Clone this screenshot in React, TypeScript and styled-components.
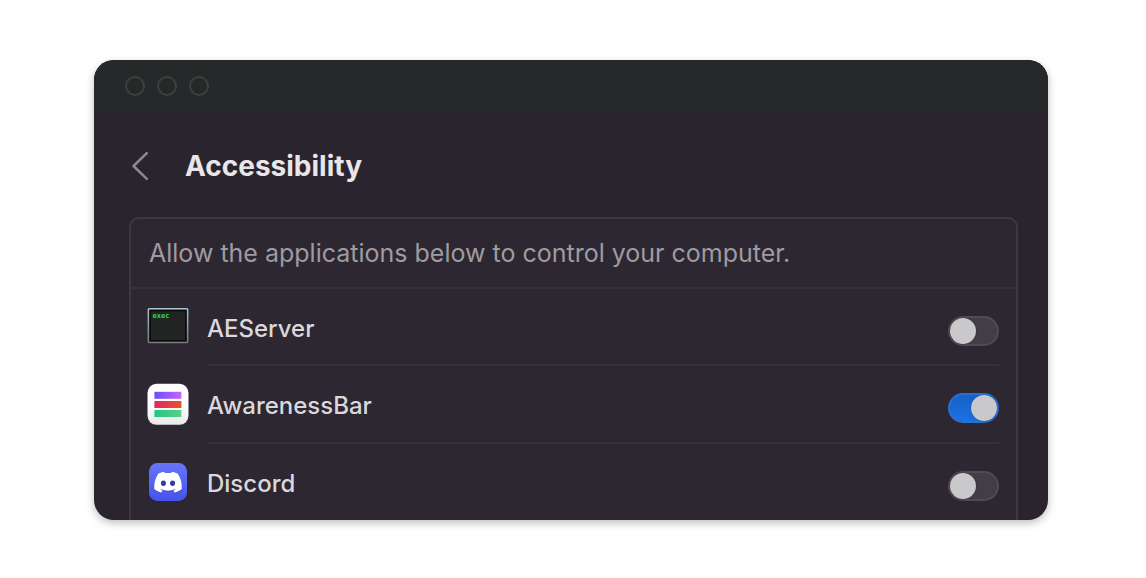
import React, { useState } from "react";
import styled, { createGlobalStyle } from "styled-components";

const GlobalStyle = createGlobalStyle`
  * { box-sizing: border-box; }
  body {
    margin: 0;
    background: #ffffff;
    font-family: Inter, "Liberation Sans", sans-serif;
  }
`;

const Page = styled.main`
  display: flex;
  height: 100vh;
  padding: 60px 98px 58px 94px;
`;

const Window = styled.section`
  display: flex;
  flex: 1;
  flex-direction: column;
  min-width: 0;
  overflow: hidden;
  border-radius: 20px;
  background: #2a242e;
  box-shadow: 0 3px 8px rgba(0, 0, 0, 0.26);
`;

const TitleBar = styled.div`
  display: flex;
  flex: none;
  align-items: center;
  gap: 12px;
  height: 52px;
  padding: 0 31px;
  background: #262829;
`;

const WindowDot = styled.span`
  width: 20px;
  height: 20px;
  border: 2px solid #3e403f;
  border-radius: 50%;
`;

const Header = styled.header`
  display: flex;
  flex: none;
  align-items: center;
  height: 105px;
  padding: 2px 36px 0;
  gap: 33px;
`;

const BackButton = styled.button`
  display: flex;
  width: 22px;
  height: 32px;
  padding: 0;
  border: 0;
  background: none;
  color: #8d8793;
`;

const Title = styled.h1`
  margin: 0;
  color: #e8e6e9;
  font-size: 28px;
  font-weight: 700;
  line-height: 36px;
`;

const Panel = styled.div`
  flex: none;
  margin: 0 30px 0 35px;
  border: 2px solid #3e3842;
  border-bottom: 0;
  border-radius: 10px 10px 0 0;
  background: #2d2731;
`;

const Description = styled.p`
  height: 70px;
  margin: 0;
  padding: 0 18px;
  border-bottom: 2px solid #36303a;
  color: #9f9ba1;
  font-size: 25px;
  line-height: 68px;
  white-space: nowrap;
`;

const AppList = styled.ul`
  margin: 0;
  padding: 0 17px 0 16px;
  list-style: none;
`;

const AppRow = styled.li`
  display: flex;
  align-items: stretch;
  gap: 18px;
`;

const IconSlot = styled.div`
  display: flex;
  flex: none;
  align-items: center;
  width: 42px;
  height: 76px;
`;

const RowBody = styled.div`
  display: flex;
  flex: 1;
  align-items: center;
  justify-content: space-between;
  height: 78px;
  border-bottom: 2px solid #36303a;

  ${AppRow}:nth-child(odd) > & {
    height: 77px;
  }

  ${AppRow}:last-child > & {
    border-bottom-color: transparent;
  }
`;

const AppName = styled.label`
  padding-top: 4px;
  color: #dad8db;
  font-size: 24px;
  font-weight: 500;
  line-height: 32px;
`;

const Toggle = styled.input`
  flex: none;
  width: 51px;
  height: 30px;
  margin: 8px 0 0;
  appearance: none;
  border: 2px solid #504a54;
  border-radius: 15px;
  background: #433d47;

  &::before {
    content: "";
    display: block;
    width: 26px;
    height: 26px;
    border-radius: 50%;
    background: #c9c8ca;
    box-shadow: 0 0 2px rgba(0, 0, 0, 0.3);
  }

  &:checked {
    border-color: #2b70d0;
    background: linear-gradient(#1762c6, #1a70e4);
  }

  &:checked::before {
    margin-left: 21px;
  }
`;

const TerminalIcon = () => (
  <svg width="42" height="42" viewBox="0 0 42 42" aria-hidden="true">
    <defs>
      <linearGradient id="frame" x1="0" y1="0" x2="0" y2="1">
        <stop offset="0" stopColor="#a9c3cf" />
        <stop offset="1" stopColor="#77777b" />
      </linearGradient>
    </defs>
    <rect x="0.6" y="2" width="40.8" height="35.2" rx="1.5" fill="url(#frame)" />
    <rect x="2.2" y="3.6" width="37.6" height="32" fill="#050606" />
    <rect x="3.8" y="5.2" width="34.4" height="28.8" fill="#222423" />
    <text x="5.6" y="12" fill="#2bdc43" fontFamily="DejaVu Sans Mono, monospace" fontSize="7" fontWeight="700">
      exec
    </text>
  </svg>
);

const BarsIcon = () => (
  <svg width="42" height="42" viewBox="0 0 42 42" aria-hidden="true">
    <defs>
      <linearGradient id="tile" x1="0" y1="0" x2="0" y2="1">
        <stop offset="0.5" stopColor="#ffffff" />
        <stop offset="1" stopColor="#e9e9e9" />
      </linearGradient>
      <linearGradient id="violet">
        <stop offset="0" stopColor="#6a50fa" />
        <stop offset="1" stopColor="#c565fb" />
      </linearGradient>
      <linearGradient id="red">
        <stop offset="0" stopColor="#e42465" />
        <stop offset="1" stopColor="#ea512c" />
      </linearGradient>
      <linearGradient id="green">
        <stop offset="0" stopColor="#1fc783" />
        <stop offset="1" stopColor="#5dcf85" />
      </linearGradient>
    </defs>
    <rect x="0.5" y="0.8" width="41" height="41" rx="9" fill="url(#tile)" />
    <rect x="7.4" y="8.8" width="27" height="7" fill="url(#violet)" />
    <rect x="7.4" y="18" width="27" height="7" fill="url(#red)" />
    <rect x="7.4" y="27" width="27" height="7" fill="url(#green)" />
  </svg>
);

const DiscordIcon = () => (
  <svg width="42" height="42" viewBox="0 0 42 42" aria-hidden="true">
    <defs>
      <linearGradient id="blurple" x1="0" y1="0" x2="0" y2="1">
        <stop offset="0" stopColor="#6874fa" />
        <stop offset="1" stopColor="#4653ec" />
      </linearGradient>
    </defs>
    <rect x="2" y="2" width="38" height="38" rx="8.5" fill="url(#blurple)" />
    <g transform="translate(7.2 7.4) scale(1.15)">
      <path
        fill="#2f3bbd"
        opacity="0.5"
        transform="translate(0 1)"
        d="M20.317 4.37a19.8 19.8 0 0 0-4.885-1.515c-.23.38-.46.86-.64 1.25a18.3 18.3 0 0 0-5.487 0 13 13 0 0 0-.64-1.25A19.7 19.7 0 0 0 3.677 4.37C.533 9.046-.32 13.58.1 18.057a19.9 19.9 0 0 0 5.993 3.03c.46-.63.87-1.295 1.226-1.994a13 13 0 0 1-1.872-.892l.372-.292a14.2 14.2 0 0 0 12.362 0l.372.292a12.3 12.3 0 0 1-1.873.892c.36.698.772 1.362 1.225 1.993a19.8 19.8 0 0 0 6.002-3.03c.5-5.177-.838-9.674-3.59-13.686z"
      />
      <path
        fill="#ffffff"
        d="M20.317 4.37a19.8 19.8 0 0 0-4.885-1.515c-.23.38-.46.86-.64 1.25a18.3 18.3 0 0 0-5.487 0 13 13 0 0 0-.64-1.25A19.7 19.7 0 0 0 3.677 4.37C.533 9.046-.32 13.58.1 18.057a19.9 19.9 0 0 0 5.993 3.03c.46-.63.87-1.295 1.226-1.994a13 13 0 0 1-1.872-.892l.372-.292a14.2 14.2 0 0 0 12.362 0l.372.292a12.3 12.3 0 0 1-1.873.892c.36.698.772 1.362 1.225 1.993a19.8 19.8 0 0 0 6.002-3.03c.5-5.177-.838-9.674-3.59-13.686z"
      />
      <ellipse cx="8.02" cy="12.9" rx="2.15" ry="2.4" fill="#303aa8" />
      <ellipse cx="15.98" cy="12.9" rx="2.15" ry="2.4" fill="#303aa8" />
    </g>
  </svg>
);

const apps = [
  { id: "aeserver", name: "AEServer", Icon: TerminalIcon, enabled: false },
  { id: "awarenessbar", name: "AwarenessBar", Icon: BarsIcon, enabled: true },
  { id: "discord", name: "Discord", Icon: DiscordIcon, enabled: false },
];

function AppEntry({ id, name, Icon, enabled }: (typeof apps)[number]) {
  const [on, setOn] = useState(enabled);
  return (
    <AppRow>
      <IconSlot>
        <Icon />
      </IconSlot>
      <RowBody>
        <AppName htmlFor={id}>{name}</AppName>
        <Toggle id={id} type="checkbox" role="switch" checked={on} onChange={() => setOn(!on)} />
      </RowBody>
    </AppRow>
  );
}

export default function App() {
  return (
    <>
      <GlobalStyle />
      <Page>
        <Window>
          <TitleBar>
            <WindowDot />
            <WindowDot />
            <WindowDot />
          </TitleBar>
          <Header>
            <BackButton type="button" aria-label="Back">
              <svg width="22" height="32" viewBox="0 0 22 32" fill="none" aria-hidden="true">
                <path
                  d="M16.8 3.2 3.5 16l13.3 12.8"
                  stroke="currentColor"
                  strokeWidth="2.5"
                  strokeLinecap="round"
                  strokeLinejoin="round"
                />
              </svg>
            </BackButton>
            <Title>Accessibility</Title>
          </Header>
          <Panel>
            <Description>Allow the applications below to control your computer.</Description>
            <AppList>
              {apps.map((app) => (
                <AppEntry key={app.id} {...app} />
              ))}
            </AppList>
          </Panel>
        </Window>
      </Page>
    </>
  );
}
